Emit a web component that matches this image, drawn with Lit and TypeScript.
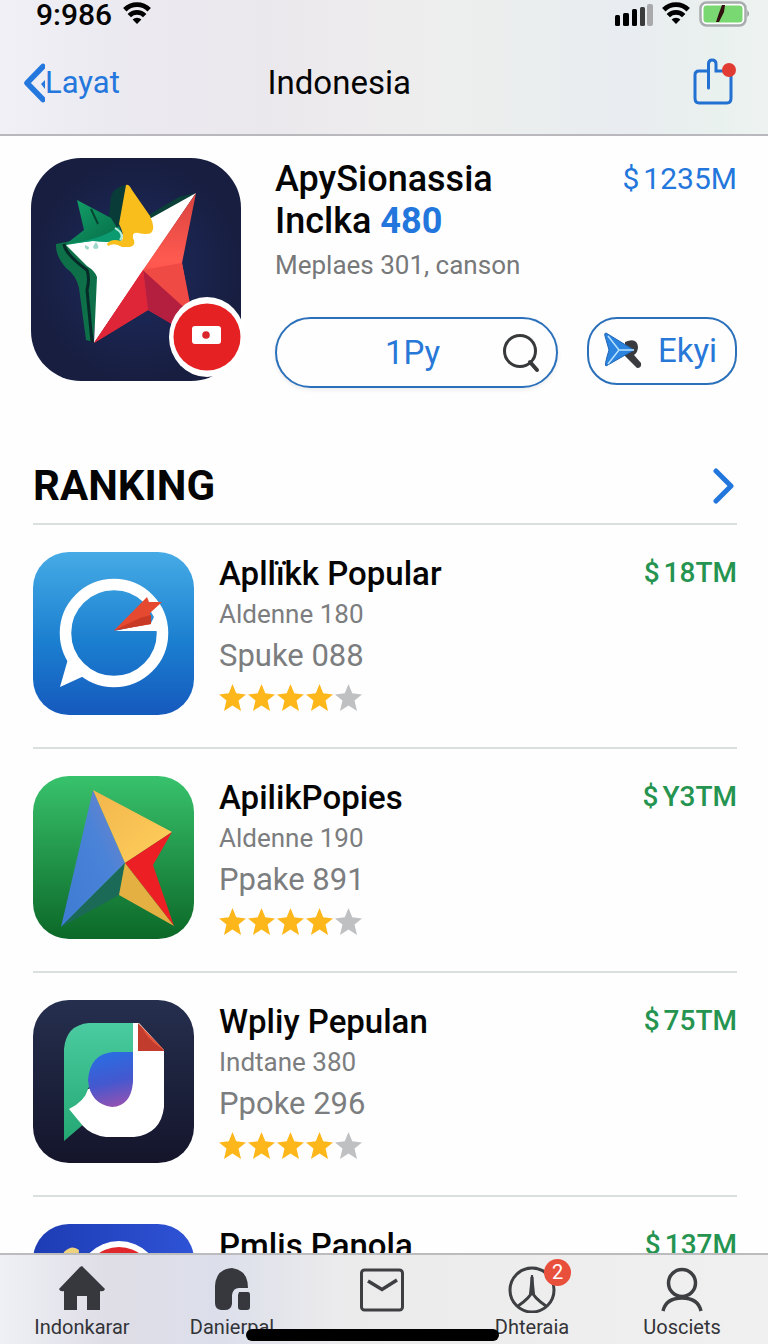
import { LitElement, html, css, svg, TemplateResult } from "lit";
import { customElement, property } from "lit/decorators.js";

interface AppEntry {
  name: string;
  maker: string;
  detail: string;
  price: string;
  rating: number;
  art: TemplateResult;
}

const wifi = html`<svg class="wifi" viewBox="0 0 28 22" aria-hidden="true">
  <g fill="none" stroke="#000" stroke-width="4.8">
    <path d="M1.8 7.800 A17.2 17.2 0 0 1 26.2 7.800" />
    <path d="M6.3 13.6 A11 11 0 0 1 21.7 13.6" />
  </g>
  <path d="M14 22 L9.6 17.6 A6 6 0 0 1 18.4 17.6 Z" />
</svg>`;

const heroArt = svg`
  <defs>
    <radialGradient id="navy"><stop offset="0" stop-color="#1e2b60"/><stop offset="1" stop-color="#171e40"/></radialGradient>
    <linearGradient id="coral" x1="0" y1="0" x2="0" y2="1"><stop offset="0" stop-color="#d9433f"/><stop offset=".45" stop-color="#ff5a50"/><stop offset="1" stop-color="#dd2733"/></linearGradient>
    <linearGradient id="leaf" x1="0" y1="0" x2="1" y2="1"><stop offset="0" stop-color="#13a36a"/><stop offset="1" stop-color="#066a47"/></linearGradient>
  </defs>
  <rect width="210" height="223" rx="50" fill="url(#navy)"/>
  <path d="M116 58 L148 39 L165 35 L120 64 Z" fill="#0a4038"/>
  <path d="M76 74 L80 38 Q83 29 95 27 L88 72 Z" fill="#093c38"/>
  <path d="M25 86 L40 83 L60 110 L69 120 L62 184 L55 182 L48 130 Q45 117 35 110 Q24 97 25 86Z" fill="#0d7048"/>
  <path d="M33 86 Q34 96 56 112 Q59 121 56 132 L61 184" fill="none" stroke="#052a28" stroke-width="3"/>
  <path d="M46 42 L80 60 L90 76 L88 82 L35 86 L53 72 Z" fill="url(#leaf)"/>
  <path d="M60 51 L67 66" stroke="#064532" stroke-width="2"/>
  <path d="M34 87 C52 82 76 80 88 68 Q94 80 88 86 Z" fill="#078a61"/>
  <path d="M35 87 L86 79 L165 35 L63 185 L66 119 Q64 113 56 108 Z" fill="#fff"/>
  <path d="M36 86 Q70 82 87 69 Q94 76 90 83 Q74 85 62 83Z" fill="#0c9a70"/>
  <path d="M84 70 Q94 76 89 82" fill="none" stroke="#b9f0dd" stroke-width="2"/>
  <path d="M95 27 Q98 26 101 32 L119 58 Q125 71 120 75 Q116 77 107 75 Q101 74 102 80 Q106 87 99 89 L91 89 Q83 84 77 88 L76 86 Q80 80 90 83 Q95 80 88 66 Z" fill="#f9be1c"/>
  <path d="M54 87 l4 2 q0 5 -4 1Z M65 84 q5 7 0 7 q-6 0 0-7Z" fill="#9dd8cb"/>
  <path d="M165 35 L151 105 L166 180 L117 152 L63 185 L112 112 Z" fill="url(#coral)"/>
  <path d="M112 112 L117 152 L63 185 Z" fill="#df2538"/>
  <path d="M112 112 L160 156 L164 180 L117 152 Z" fill="#b41e3f"/>
  <path d="M112 112 L151 147 L160 156 L151 105 Z" fill="#f04a45"/>`;

const chatArt = svg`
  <defs><linearGradient id="sky" x1="0" y1="0" x2="0" y2="1"><stop offset="0" stop-color="#46abe5"/><stop offset=".55" stop-color="#1b7fd0"/><stop offset="1" stop-color="#1559bd"/></linearGradient></defs>
  <rect width="161" height="163" rx="36" fill="url(#sky)"/>
  <circle cx="81" cy="81" r="48.500" fill="none" stroke="#fff" stroke-width="11.500"/>
  <path d="M35 107 L27 135 L51 124 Z" fill="#fff"/>
  <path d="M82 79 L118 71 L126 55 L131 79 Z" fill="#fff"/>
  <path d="M81 78.500 L114 45 L116 50 L129 50 L117 61 L118 72 Z" fill="#e5492f"/>
  <path d="M81 78.500 L107 66 L118 63 L118 72 Z" fill="#c93a26"/>`;

const arrowArt = svg`
  <defs>
    <linearGradient id="grass" x1="0" y1="0" x2="0" y2="1"><stop offset="0" stop-color="#38c26c"/><stop offset="1" stop-color="#0c6828"/></linearGradient>
    <linearGradient id="steel" x1="1" y1="0" x2="0" y2="1"><stop offset="0" stop-color="#7c82c4"/><stop offset=".4" stop-color="#4a83d8"/><stop offset="1" stop-color="#3d7bd2"/></linearGradient>
    <linearGradient id="amber" x1="0" y1="0" x2="1" y2="1"><stop offset="0" stop-color="#f2b54d"/><stop offset="1" stop-color="#ffd05b"/></linearGradient>
  </defs>
  <rect width="161" height="163" rx="36" fill="url(#grass)"/>
  <path d="M60 14 L92 87 L28 151 Z" fill="url(#steel)"/>
  <path d="M60 14 L139 56 L92 87 Z" fill="url(#amber)"/>
  <path d="M92 87 L86 119 L28 151 Z" fill="#1b6a57"/>
  <path d="M92 87 L139 56 L120 89 L141 150 Z" fill="#ec2024"/>
  <path d="M92 87 L141 150 L86 119 Z" fill="#e4b041"/>`;

const letterArt = svg`
  <defs>
    <linearGradient id="night" x1="0" y1="0" x2="0" y2="1"><stop offset="0" stop-color="#252f4e"/><stop offset="1" stop-color="#14152b"/></linearGradient>
    <linearGradient id="mint" x1="0" y1="0" x2="0" y2="1"><stop offset="0" stop-color="#4bcba0"/><stop offset="1" stop-color="#24a873"/></linearGradient>
    <linearGradient id="orb" x1=".4" y1="0" x2=".6" y2="1"><stop offset="0" stop-color="#2a6de2"/><stop offset=".55" stop-color="#4458cf"/><stop offset="1" stop-color="#9352b2"/></linearGradient>
  </defs>
  <rect width="161" height="163" rx="36" fill="url(#night)"/>
  <path d="M31 141 V49 Q33 25 56 23 H100 V62 L55 88 L52 123 Z" fill="url(#mint)"/>
  <path d="M100 23 H106 L131 50 V107 Q128 134 101 137 H73 Q58 135 50 126 L36 109 Q52 101 55 89 L100 75 Z" fill="#fff"/>
  <path d="M80 52 H100 V82 Q98 106 79 107 Q57 104 55 80 Q57 54 80 52Z" fill="url(#orb)"/>
  <path d="M105 23 L131 50 V51 H105 Z" fill="#c23c2d"/>
  <path d="M108 25 Q113 39 131 50 L108 26Z" fill="#e6583d"/>`;

const ballArt = svg`
  <defs><linearGradient id="royal" x1="0" y1="0" x2="1" y2="0"><stop offset="0" stop-color="#1d3cb4"/><stop offset="1" stop-color="#2f53d6"/></linearGradient></defs>
  <rect width="161" height="163" rx="36" fill="url(#royal)"/>
  <path d="M24 50 L31 28 Q39 20 46 26 L44 50Z" fill="#efd37c"/>
  <circle cx="86" cy="59" r="42" fill="#fff"/>
  <circle cx="86" cy="59" r="36" fill="#e0282c"/>`;

@customElement("rating-stars")
export class RatingStars extends LitElement {
  @property({ type: Number }) value = 0;

  static styles = css`
    :host { display: flex; gap: 2px; }
    .star { width: 27px; height: 27px; fill: #bfc0c2; }
    .full { fill: #fdb71a; }
  `;

  render() {
    return [1, 2, 3, 4, 5].map(
      (n) => html`<svg class="star ${n <= this.value ? "full" : ""}" viewBox="0 0 26 26" aria-hidden="true">
        <path d="M13 0 L16.600 9 L26 10 L18.800 16 L21.200 26 L13 20.600 L4.800 26 L7.200 16 L0 10 L9.400 9 Z" />
      </svg>`
    );
  }
}

@customElement("app-root")
export class AppRoot extends LitElement {
  private apps: AppEntry[] = [
    { name: "Apllïkk Popular", maker: "Aldenne 180", detail: "Spuke 088", price: "18TM", rating: 4, art: chatArt },
    { name: "ApilikPopies", maker: "Aldenne 190", detail: "Ppake 891", price: "Y3TM", rating: 4, art: arrowArt },
    { name: "Wpliy Pepulan", maker: "Indtane 380", detail: "Ppoke 296", price: "75TM", rating: 4, art: letterArt },
    { name: "Pmlis Panola", maker: "Aldenne 170", detail: "Ppake 284", price: "137M", rating: 4, art: ballArt },
  ];

  static styles = css`
    :host {
      display: flex;
      flex-direction: column;
      height: 100vh;
      overflow: hidden;
      position: relative;
      background: #fefefe;
      color: #050505;
      font-family: Roboto, "Liberation Sans", sans-serif;
    }
    * { box-sizing: border-box; }
    h1, h2, h3, p, ul { margin: 0; padding: 0; }
    ul { list-style: none; }
    a { color: inherit; text-decoration: none; }
    button { font: inherit; color: inherit; background: none; border: 0; padding: 0; margin: 0; }
    svg { display: block; flex: none; }

    .top {
      flex: none;
      background: linear-gradient(90deg, #f0f0f6, #ebeaf0 14%, #ebe8ed 35%, #eeeded 52%, #ebeeee 68%, #e9ecf0 82%, #e9f1ee 94%, #eef3f1);
      border-bottom: 2px solid #b9b9bd;
    }
    .status {
      display: flex;
      justify-content: space-between;
      height: 32px;
      padding: 0 18px 0 36px;
    }
    .clock { display: flex; gap: 11px; font-size: 30px; line-height: 29px; font-weight: 500; }
    .signals { display: flex; gap: 9px; }
    .wifi { width: 28px; height: 22px; margin-top: 2px; }
    .bars { width: 38px; height: 23px; margin-top: 4px; }
    .battery { width: 51px; height: 26px; margin-top: 1px; }
    .nav {
      display: grid;
      grid-template-columns: 3fr auto 4fr;
      align-items: center;
      height: 102px;
      padding: 0 31px 0 23px;
    }
    .back { display: flex; align-items: center; color: #2377dd; font-size: 31px; line-height: 40px; }
    .chevron { width: 22px; height: 40px; }
    .page { font-size: 33px; line-height: 40px; font-weight: 400; }
    .share { justify-self: end; }
    .share svg { width: 44px; height: 50px; padding-bottom: 2px; }

    .body { flex: 1; min-height: 0; overflow: hidden; padding: 22px 31px 0; }
    .hero { display: flex; align-items: flex-start; gap: 34px; }
    .cover { position: relative; flex: none; }
    .cover svg { width: 210px; height: 223px; }
    .cover .play { position: absolute; right: -4px; bottom: 4px; width: 76px; height: 80px; }
    .info { flex: 1; min-width: 0; }
    .line { display: flex; justify-content: space-between; align-items: flex-start; }
    .title { font-size: 36px; line-height: 42px; font-weight: 500; }
    .title b { color: #2377dc; font-weight: 700; }
    .cost, .price { display: flex; gap: 4px; font-size: 30px; line-height: 42px; color: #2377dc; }
    .sub { font-size: 26px; line-height: 46px; color: #77787a; }
    .actions { display: flex; align-items: flex-start; gap: 29px; margin-top: 29px; }
    .buy, .alt {
      display: flex;
      align-items: center;
      border: 2px solid #2b70ba;
      color: #2878d8;
      font-size: 33px;
      line-height: 40px;
    }
    .buy { flex: 1; height: 71px; padding: 0 16px 0 18px; border-radius: 36px; box-shadow: 0 2px 4px #00000014; }
    .buy span { flex: 1; padding-left: 28px; text-align: center; }
    .buy svg { width: 38px; height: 40px; }
    .alt { width: 150px; height: 68px; padding: 0 14px; gap: 15px; border-radius: 30px; }
    .alt svg { width: 40px; height: 38px; }

    .heading { display: flex; justify-content: space-between; align-items: center; margin: 73px 2px 0 2px; padding-bottom: 12px; }
    .heading h2 { font-size: 42px; line-height: 50px; font-weight: 700; }
    .heading svg { width: 22px; height: 38px; }
    .app { display: flex; gap: 25px; margin-left: 2px; padding: 27px 0 32px; border-top: 2px solid #dcdfdf; }
    .tile { width: 161px; height: 163px; }
    .facts { flex: 1; min-width: 0; display: flex; flex-direction: column; }
    .name { font-size: 33px; line-height: 44px; font-weight: 500; }
    .price { font-size: 28px; font-weight: 500; color: #259450; }
    .maker { font-size: 26px; line-height: 36px; color: #7c7d7e; }
    .detail { font-size: 31px; line-height: 48px; margin-bottom: 4px; color: #7c7d7e; }

    .tabs {
      flex: none;
      display: grid;
      grid-template-columns: repeat(5, 1fr);
      height: 91px;
      padding: 0 11px 0 7px;
      border-top: 2px solid #bcbcbf;
      background: linear-gradient(90deg, #eff0f6, #dfdde6 14%, #dcdfeb 28%, #ecebec 45%, #f0f0f0);
      color: #333438;
      font-size: 20px;
      line-height: 28px;
    }
    .tab { display: flex; flex-direction: column; align-items: center; padding-top: 10px; }
    .glyph { position: relative; }
    .glyph svg { width: 50px; height: 48px; }
    .badge {
      position: absolute;
      right: -14px;
      top: -6px;
      width: 27px;
      height: 27px;
      border-radius: 50%;
      background: #e9503b;
      color: #fff;
      font-size: 20px;
      line-height: 27px;
      text-align: center;
    }
    .home { position: absolute; left: 32%; right: 35%; bottom: 3px; height: 12px; border-radius: 6px; background: #000; }
  `;

  private renderApp(app: AppEntry) {
    return html`<li class="app">
      <svg class="tile" viewBox="0 0 161 163" aria-hidden="true">${app.art}</svg>
      <div class="facts">
        <div class="line">
          <h3 class="name">${app.name}</h3>
          <span class="price"><span>$</span><span>${app.price}</span></span>
        </div>
        <p class="maker">${app.maker}</p>
        <p class="detail">${app.detail}</p>
        <rating-stars .value=${app.rating}></rating-stars>
      </div>
    </li>`;
  }

  render() {
    return html`
      <header class="top">
        <div class="status">
          <div class="clock"><span>9:986</span>${wifi}</div>
          <div class="signals">
            <svg class="bars" viewBox="0 0 38 23" aria-hidden="true">
              <rect y="11" width="5" height="11" rx="1.500" /><rect x="8" y="9" width="6" height="13" rx="1.500" />
              <rect x="17" y="5" width="5" height="17" rx="1.500" /><rect x="25" y="3" width="5" height="19" rx="1.500" fill="#3a3a3a" />
              <rect x="32" width="6" height="22" rx="2" fill="#a9a9ab" />
            </svg>
            ${wifi}
            <svg class="battery" viewBox="0 0 51 26" aria-hidden="true">
              <rect x="1.500" y="1.500" width="45" height="23" rx="6" fill="#fff" stroke="#a9acae" stroke-width="2.500" />
              <rect x="4.500" y="4.500" width="39" height="17" rx="3" fill="#7ad873" />
              <path d="M48.500 9 Q51 13 48.500 16Z" fill="#777" />
              <path d="M23 4 H26 L25 11 L20 21 H17 L20 12Z" fill="#321010" />
            </svg>
          </div>
        </div>
        <nav class="nav">
          <a class="back" href="#back">
            <svg class="chevron" viewBox="0 0 22 40" aria-hidden="true">
              <path d="M20 3.500 L4 20 L20 36.500" fill="none" stroke="#2377dd" stroke-width="5.500" stroke-linecap="round" stroke-linejoin="round" />
              <path d="M22 17 L18 21 L22 26Z" fill="#2377dd" />
            </svg>Layat
          </a>
          <h1 class="page">Indonesia</h1>
          <button class="share" aria-label="Share">
            <svg viewBox="0 0 44 48" aria-hidden="true">
              <path d="M15.500 30 V6 Q15.500 2 19 2 Q23 2 23 6 V13 H33 M15.500 13 H6 Q2 13 2 17 V40 Q2 45 6 45 H34 Q38 45 38 40 V17" fill="none" stroke="#2170d2" stroke-width="3" stroke-linecap="round" />
              <circle cx="36" cy="12" r="7" fill="#e23b32" />
            </svg>
          </button>
        </nav>
      </header>

      <main class="body">
        <section class="hero">
          <div class="cover">
            <svg viewBox="0 0 210 223" aria-hidden="true">${heroArt}</svg>
            <svg class="play" viewBox="0 0 76 80" aria-hidden="true">
              <ellipse cx="38" cy="40" rx="38" ry="40" fill="#fff" /><circle cx="38" cy="40" r="33.500" fill="#e62124" />
              <rect x="23" y="29" width="29" height="18" rx="3" fill="#fff" /><circle cx="37" cy="38" r="3.800" fill="#d9262b" />
            </svg>
          </div>
          <div class="info">
            <div class="line">
              <h2 class="title">ApySionassia<br />Inclka <b>480</b></h2>
              <span class="cost"><span>$</span><span>1235M</span></span>
            </div>
            <p class="sub">Meplaes 301, canson</p>
            <div class="actions">
              <button class="buy">
                <span>1Py</span>
                <svg viewBox="0 0 38 40" aria-hidden="true">
                  <g fill="none" stroke="#38393b" stroke-linecap="round"><circle cx="18" cy="18" r="15.500" stroke-width="3" /><path d="M28 29 L35 37" stroke-width="4" /></g>
                </svg>
              </button>
              <button class="alt">
                <svg viewBox="0 0 40 38" aria-hidden="true">
                  <path d="M22 10 Q34 5 35 15 Q35 20 31 23 L38 31 Q39 36 34 36 L22 24Z" fill="#3a3b3f" />
                  <path d="M3 1 L31 18 L3 34 Q1 34 6 18 L2 4 Q1 1 3 1Z" fill="#2a84e0" stroke="#2066b5" />
                  <path d="M5 4 L16 18 L5 32 M16 18 H31" fill="none" stroke="#b9e2ff" stroke-width="1.500" />
                </svg>
                <span>Ekyi</span>
              </button>
            </div>
          </div>
        </section>

        <section>
          <div class="heading">
            <h2>RANKING</h2>
            <a href="#ranking" aria-label="Open ranking">
              <svg viewBox="0 0 22 38" aria-hidden="true"><path d="M3 4 L18 19 L3 34" fill="none" stroke="#2377dc" stroke-width="5" stroke-linecap="round" stroke-linejoin="round" /></svg>
            </a>
          </div>
          <ul>${this.apps.map((app) => this.renderApp(app))}</ul>
        </section>
      </main>

      <nav class="tabs">
        <a class="tab" href="#home"><span class="glyph"><svg viewBox="0 0 50 48" aria-hidden="true">
          <path d="M25 1 L48 24 Q47 27 43 26 V45 H30 V31 H20 V45 H7 V26 Q3 27 2 24 L23 2Z" fill="#36383e" />
        </svg></span>Indonkarar</a>
        <a class="tab" href="#apps"><span class="glyph"><svg viewBox="0 0 50 48" aria-hidden="true">
          <path d="M8 21 Q9 4 25 3 Q41 5 41 23 H32 Q26 23 25 30 V39 Q24 45 18 45 H14 Q8 44 8 38Z M32 27 H41 Q43 27 43 30 V42 Q43 45 40 45 H34 Q31 45 31 42 V30Z" fill="#36383e" />
        </svg></span>Danierpal</a>
        <a class="tab" href="#inbox" aria-label="Inbox"><span class="glyph"><svg viewBox="0 0 50 48" aria-hidden="true">
          <g fill="none" stroke="#3e3f42" stroke-width="3"><rect x="4.500" y="5" width="41" height="40" rx="3" /><path d="M11 16 L25 24.500 L40 15" stroke-width="3.500" /></g>
        </svg></span></a>
        <a class="tab" href="#news"><span class="glyph"><svg viewBox="0 0 50 48" aria-hidden="true">
          <g fill="none" stroke="#3e3f42" stroke-width="3"><circle cx="25" cy="25" r="22" /><path d="M25 12 V26 Q24 32 11 41 M25 26 Q26 32 39 41" /></g><path d="M24 10 H26 L28 29 H22Z" fill="#3e3f42"/>
        </svg><span class="badge">2</span></span>Dhteraia</a>
        <a class="tab" href="#profile"><span class="glyph"><svg viewBox="0 0 50 48" aria-hidden="true">
          <g fill="none" stroke="#3e3f42" stroke-width="3.500"><circle cx="25" cy="18" r="13.500" /><path d="M6 46 Q9 33 25 33 Q41 33 44 46" /></g>
        </svg></span>Uosciets</a>
      </nav>
      <div class="home"></div>
    `;
  }
}
